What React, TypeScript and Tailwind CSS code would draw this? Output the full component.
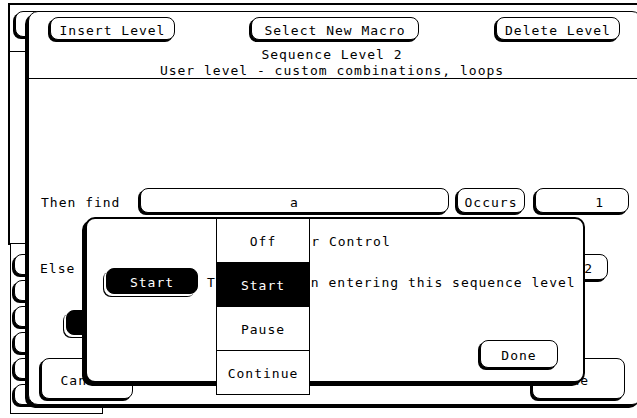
import type { ReactNode } from "react";

function Key({
    className = "",
    children,
    dark = false,
    align = "justify-center",
}: {
    className?: string;
    children?: ReactNode;
    dark?: boolean;
    align?: string;
}) {
    return (
        <div
            className={`flex shrink-0 items-center whitespace-pre rounded-[8px] border border-black ${align} ${dark
                ? "bg-black text-white shadow-[-2px_2px_0_0_#fff,-3px_3px_0_0_#000]"
                : "bg-white shadow-[-2px_2px_0_0_#000]"
                } ${className}`}
        >
            <span className="relative top-[2px]">{children}</span>
        </div>
    );
}

export default function App() {
    return (
        <div className="relative h-[418px] w-[637px] overflow-hidden bg-white font-['DejaVu_Sans_Mono',monospace] text-[13px] leading-[16px] tracking-[1px] text-black">
            {/* windows further back */}
            <div className="absolute left-[8px] top-[3px] h-[242px] w-[640px] border-l-2 border-t-2 border-black" />
            <Key className="absolute left-[15px] top-[11px] h-[26px] w-[40px]" />
            <div className="absolute left-[8px] top-[51px] h-px w-[20px] bg-black" />
            <div className="absolute left-[10px] top-[243px] flex h-[171px] w-[93px] flex-col gap-[5px] border border-black bg-white pl-[3px] pt-[10px]">
                {[0, 1, 2, 3, 4, 5].map((i) => (
                    <Key key={i} className="h-[21px] w-[60px]" />
                ))}
            </div>

            {/* main window */}
            <div className="absolute left-[28px] top-[11px] h-[394px] w-[614px] rounded-[10px] border border-black bg-white shadow-[-3px_3px_0_0_#000]">
                <div className="mt-[5px] flex h-[23px]">
                    <Key className="ml-[21px] w-[125px]">Insert Level</Key>
                    <Key className="ml-[76px] w-[168px]">Select New Macro</Key>
                    <Key className="ml-[77px] w-[124px]">Delete Level</Key>
                </div>
                <div className="mt-[6px] h-[33px] border-b border-black pr-[6px] text-center whitespace-pre">
                    <div className="relative top-[1px]">Sequence Level 2</div>
                    <div className="relative top-[1px]">User level - custom combinations, loops</div>
                </div>

                <div className="mt-[109px] flex h-[25px] items-center">
                    <span className="relative top-[2px] ml-[12px] w-[99px] whitespace-pre">Then find</span>
                    <Key className="h-full w-[309px]">a</Key>
                    <Key className="ml-[8px] h-full w-[68px]">Occurs</Key>
                    <Key className="ml-[10px] h-full w-[94px] pr-[24px]" align="justify-end">
                        1
                    </Key>
                </div>

                <div className="mt-[41px] flex h-[26px] items-center">
                    <span className="relative top-[2px] ml-[11px]">Else</span>
                    <Key className="ml-auto mr-[33px] h-full w-[110px] pr-[14px]" align="justify-end">
                        Level 2
                    </Key>
                </div>

                <div className="mt-[30px] flex h-[25px]">
                    <Key dark className="ml-[37px] h-full w-[100px]" />
                </div>

                <div className="mt-[23px] flex h-[41px]">
                    <Key className="ml-[12px] h-full w-[92px]">Cancel</Key>
                    <Key className="ml-auto mr-[16px] h-full w-[93px] pr-[14px]">Done</Key>
                </div>
            </div>

            {/* timer control dialog */}
            <div className="absolute left-[85px] top-[217px] h-[166px] w-[500px] rounded-[10px] border-2 border-black bg-white shadow-[-3px_3px_0_0_#000]">
                <div className="relative top-[1px] ml-[189px] mt-[14px] whitespace-pre">Timer Control</div>
                <div className="mt-[19px] flex items-center">
                    <Key dark className="ml-[19px] h-[26px] w-[92px]">
                        Start
                    </Key>
                    <span className="relative top-[2px] ml-[9px]">T</span>
                    <span className="relative top-[2px] ml-[95px] whitespace-pre">n entering this sequence level</span>
                </div>
                <Key className="ml-[393px] mt-[46px] h-[28px] w-[78px]">Done</Key>
            </div>

            {/* pop-up choice list */}
            <div className="absolute left-[216px] top-[218px] flex w-[94px] flex-col border border-black bg-white text-center">
                <div className="flex h-[43px] items-center justify-center pt-[3px]">Off</div>
                <div className="flex h-[45px] items-center justify-center bg-black pt-[3px] text-white">Start</div>
                <div className="flex h-[44px] items-center justify-center border-b border-black pt-[3px]">Pause</div>
                <div className="flex h-[43px] items-center justify-center pt-[3px]">Continue</div>
            </div>
        </div>
    );
}
